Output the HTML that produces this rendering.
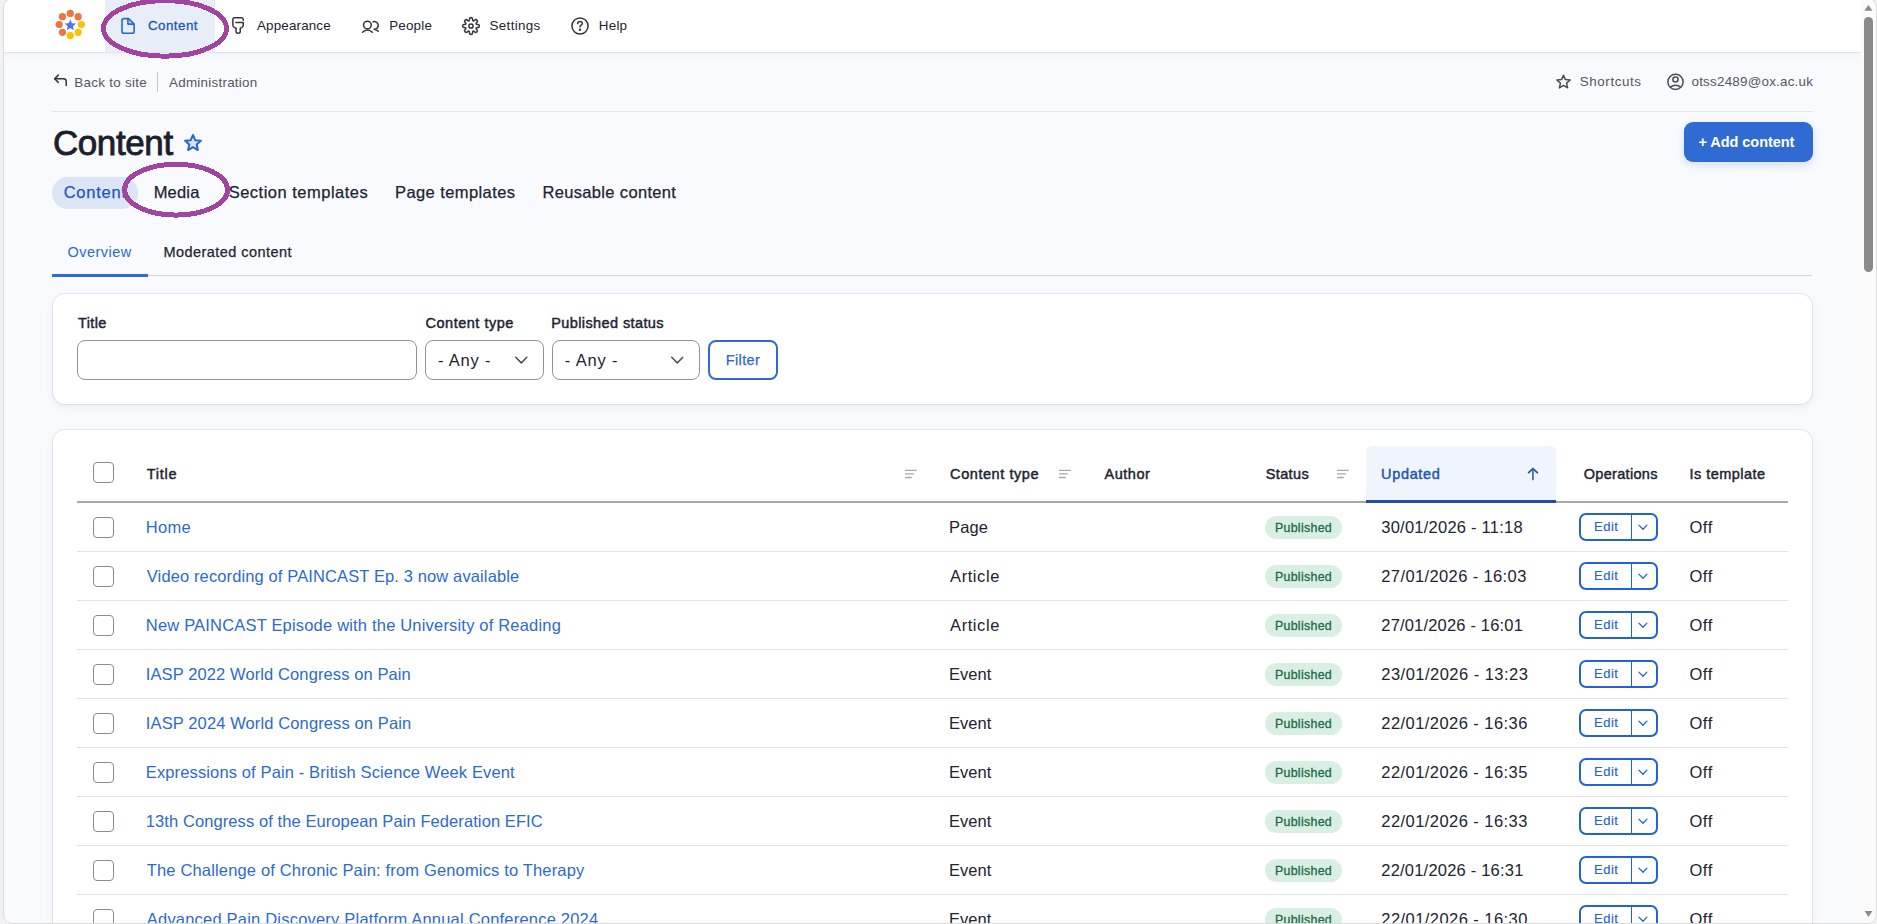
<!DOCTYPE html>
<html><head><meta charset="utf-8"><title>Content</title>
<style>
*{box-sizing:border-box;margin:0;padding:0}
html,body{width:1877px;height:924px;overflow:hidden;background:#f8fafe;font-family:"Liberation Sans",sans-serif;position:relative}
.ab{position:absolute}
.t{position:absolute;white-space:nowrap}
.topbar{position:absolute;left:0;top:0;width:1861px;height:52px;background:#fff;box-shadow:0 1px 0 rgba(40,50,90,.07),0 2px 6px rgba(40,50,90,.06)}
.card{position:absolute;background:#fff;border-radius:12px;box-shadow:0 0 0 1px rgba(0,0,0,.065),0 3px 8px rgba(40,55,90,.07)}
.inp{position:absolute;border:1px solid #8e929c;border-radius:8px;background:#fff}
.cb{position:absolute;width:21px;height:21px;border:1.1px solid #878b98;border-radius:4px;background:#fff}
.badge{position:absolute;width:77px;height:23px;border-radius:12px;background:#d9efe4;color:#1e6a48;font-size:12px;font-weight:700;line-height:23px;text-align:center;letter-spacing:-0.1px}
.eb{position:absolute;width:79px;height:28px;border:2px solid #2463cf;border-radius:7px;background:#fff}
.ebt{position:absolute;left:14.5px;top:7px;font-size:12.5px;line-height:14px;color:#2463cf}
.ebd{position:absolute;left:49.9px;top:0;width:1.2px;height:24px;background:#2463cf}
.frame{position:absolute;left:4px;top:-1px;width:1872px;height:924px;border-radius:8px;box-shadow:0 0 0 1px #dcdcdc,0 0 0 30px #f2f2f2;pointer-events:none}
</style></head><body>
<div class="topbar"></div>
<div style="position:absolute;left:105px;top:0;width:110px;height:52px;background:#e8eef8"></div>
<svg class="ab" style="left:50px;top:5px" width="40" height="40" viewBox="50 5 40 40"><circle cx="70.30" cy="13.40" r="3.6" fill="#ee7440"/><circle cx="78.15" cy="16.65" r="3.6" fill="#ee7440"/><circle cx="81.40" cy="24.50" r="3.6" fill="#fcc200"/><circle cx="78.15" cy="32.35" r="3.6" fill="#fcc200"/><circle cx="70.30" cy="35.60" r="3.6" fill="#fcc200"/><circle cx="62.45" cy="32.35" r="3.6" fill="#ee7440"/><circle cx="59.20" cy="24.50" r="3.6" fill="#ee7440"/><circle cx="62.45" cy="16.65" r="3.6" fill="#ee7440"/><polygon points="70.30,19.40 71.89,23.22 76.01,23.55 72.87,26.23 73.83,30.25 70.30,28.10 66.77,30.25 67.73,26.23 64.59,23.55 68.71,23.22" fill="#4f6ff5"/></svg>
<svg class="ab" style="left:115px;top:12px" width="26" height="28" viewBox="115 12 26 28" fill="none" stroke="#2a66d0" stroke-width="1.6" stroke-linejoin="round"><path d="M128.3 18.8 V24.1 H134.1 Z" fill="#c9d8f2" stroke="none"/><path d="M128.6 18.6 H123.8 Q122 18.6 122 20.4 V31.4 Q122 33.2 123.8 33.2 H132.3 Q134.1 33.2 134.1 31.4 V24.1 Z"/><path d="M127.9 18.6 V24.1 H134.1"/></svg>
<svg class="ab" style="left:228px;top:13px" width="20" height="25" viewBox="228 13 20 25" fill="none" stroke="#34353f" stroke-width="1.5" stroke-linecap="round" stroke-linejoin="round"><path d="M243.25 20.3 V19.5 Q243.25 17.85 241.6 17.85 H234.5 Q232.85 17.85 232.85 19.5 V25.3 Q232.85 27 234.6 27.6 L236.05 28.2 V31.6 Q236.05 33.35 238.15 33.35 Q240.25 33.35 240.25 31.6 V28.2 L241.6 27.6 Q243.25 27 243.25 25.3 V22.6 H235.9"/></svg>
<svg class="ab" style="left:357px;top:15px" width="26" height="22" viewBox="357 15 26 22" fill="none" stroke="#34353f" stroke-width="1.5" stroke-linecap="round"><circle cx="367.4" cy="25" r="3.85"/><path d="M362.5 32.3 Q367.4 27.6 372.4 32.3"/><path d="M373 21.9 A3.8 3.8 0 1 1 374.2 29.2"/><path d="M374.6 29.6 Q377 29.9 378.2 31.3"/></svg>
<svg class="ab" style="left:459px;top:14px" width="24" height="24" viewBox="459 14 24 24" fill="none" stroke="#34353f" stroke-width="1.5" stroke-linejoin="round"><path d="M469.26 20.36 L469.65 18.12 Q471.00 17.10 472.35 18.12 L472.74 20.36 Q473.03 21.10 473.75 20.78 L473.75 20.78 L475.62 19.47 Q477.29 19.71 477.53 21.38 L476.22 23.25 Q475.90 23.97 476.64 24.26 L476.64 24.26 L478.88 24.65 Q479.90 26.00 478.88 27.35 L476.64 27.74 Q475.90 28.03 476.22 28.75 L476.22 28.75 L477.53 30.62 Q477.29 32.29 475.62 32.53 L473.75 31.22 Q473.03 30.90 472.74 31.64 L472.74 31.64 L472.35 33.88 Q471.00 34.90 469.65 33.88 L469.26 31.64 Q468.97 30.90 468.25 31.22 L468.25 31.22 L466.38 32.53 Q464.71 32.29 464.47 30.62 L465.78 28.75 Q466.10 28.03 465.36 27.74 L465.36 27.74 L463.12 27.35 Q462.10 26.00 463.12 24.65 L465.36 24.26 Q466.10 23.97 465.78 23.25 L465.78 23.25 L464.47 21.38 Q464.71 19.71 466.38 19.47 L468.25 20.78 Q468.97 21.10 469.26 20.36 Z"/><circle cx="471" cy="26" r="2.1"/></svg>
<svg class="ab" style="left:567px;top:14px" width="24" height="24" viewBox="567 14 24 24" fill="none" stroke="#34353f" stroke-width="1.5" stroke-linecap="round"><circle cx="580" cy="26" r="8.05"/><path d="M577.6 23.6 Q577.8 21.4 580 21.4 Q582.3 21.4 582.3 23.4 Q582.3 24.6 580.9 25.3 Q580 25.8 580 27"/><circle cx="580" cy="29.8" r="0.5" fill="#34353f"/></svg>
<svg class="ab" style="left:50px;top:70px" width="22" height="22" viewBox="50 70 22 22" fill="none" stroke="#34353f" stroke-width="1.5" stroke-linecap="round" stroke-linejoin="round"><path d="M58.3 75.1 L54.6 78.8 L58.3 82.4"/><path d="M54.8 78.8 H63.6 Q66.2 78.8 66.2 81.4 V85.4"/></svg>
<div class="ab" style="left:157px;top:72px;width:1px;height:20px;background:#c9cad0"></div>
<svg class="ab" style="left:1552px;top:70px" width="22" height="22" viewBox="1552 70 22 22" fill="none" stroke="#4b4c57" stroke-width="1.5" stroke-linejoin="round"><polygon points="1563.50,75.20 1565.38,79.61 1570.16,80.04 1566.54,83.19 1567.61,87.86 1563.50,85.40 1559.39,87.86 1560.46,83.19 1556.84,80.04 1561.62,79.61"/></svg>
<svg class="ab" style="left:1664px;top:71px" width="24" height="22" viewBox="1664 71 24 22" fill="none" stroke="#4b4c57" stroke-width="1.5"><circle cx="1675.5" cy="81.9" r="7.6"/><ellipse cx="1675.5" cy="79.6" rx="2.6" ry="2.5"/><path d="M1670 87.3 Q1675.5 83.2 1681 87.3"/></svg>
<div class="ab" style="left:52px;top:111px;width:1761px;height:1px;background:#e3e4e8"></div>
<svg class="ab" style="left:180px;top:130px" width="26" height="26" viewBox="180 130 26 26" fill="#d6e2f5" stroke="#2a66d0" stroke-width="2" stroke-linejoin="round"><polygon points="193.00,135.00 195.29,140.14 200.89,140.74 196.71,144.51 197.88,150.01 193.00,147.20 188.12,150.01 189.29,144.51 185.11,140.74 190.71,140.14"/></svg>
<div class="ab" style="left:1684px;top:122px;width:129px;height:40px;background:#2f6bd2;border-radius:9px;box-shadow:0 3px 8px rgba(47,107,210,.18)"></div>
<div class="ab" style="left:52px;top:177px;width:86px;height:32px;background:#dbe5f5;border-radius:16px"></div>
<div class="ab" style="left:52px;top:275px;width:1760px;height:1px;background:#d3d4da"></div>
<div class="ab" style="left:52px;top:274px;width:96px;height:3px;background:#2f6bd2"></div>
<div class="card" style="left:53px;top:294px;width:1759px;height:110px"></div>
<div class="inp" style="left:77px;top:340px;width:340px;height:40px"></div>
<div class="inp" style="left:425px;top:340px;width:119px;height:40px"></div>
<div class="inp" style="left:552px;top:340px;width:148px;height:40px"></div>
<svg class="ab" style="left:512.7px;top:353px" width="18" height="14" viewBox="512.7 353 18 14" fill="none" stroke="#4b4c57" stroke-width="1.5" stroke-linecap="round" stroke-linejoin="round"><path d="M515.4 357.3 L521.0 362.9 L526.5 357.3"/></svg>
<svg class="ab" style="left:668.8px;top:353px" width="18" height="14" viewBox="668.8 353 18 14" fill="none" stroke="#4b4c57" stroke-width="1.5" stroke-linecap="round" stroke-linejoin="round"><path d="M671.5 357.3 L677.1 362.9 L682.6 357.3"/></svg>
<div class="ab" style="left:708px;top:340px;width:70px;height:40px;border:2px solid #2f6bd2;border-radius:8px;background:#fff"></div>
<div class="card" style="left:53px;top:430px;width:1759px;height:600px"></div>
<div class="ab" style="left:1366px;top:446px;width:190px;height:57px;background:#f0f4fb;border-radius:6px 6px 0 0"></div>
<div class="ab" style="left:77px;top:501px;width:1711px;height:2px;background:#a9a9ad"></div>
<div class="ab" style="left:1366px;top:500px;width:190px;height:3px;background:#1f4fa0"></div>
<div class="cb" style="left:93px;top:462px"></div>
<svg class="ab" style="left:904.1px;top:466px" width="15" height="16" viewBox="904.1 466 15 16" stroke="#a4a6ae" stroke-width="1.3" stroke-linecap="round"><path d="M905.7 470.4 H916.3 M905.7 473.9 H913.6 M905.7 477.5 H911.4"/></svg>
<svg class="ab" style="left:1058.1px;top:466px" width="15" height="16" viewBox="1058.1 466 15 16" stroke="#a4a6ae" stroke-width="1.3" stroke-linecap="round"><path d="M1059.7 470.4 H1070.3 M1059.7 473.9 H1067.6 M1059.7 477.5 H1065.4"/></svg>
<svg class="ab" style="left:1336.0px;top:466px" width="15" height="16" viewBox="1336.0 466 15 16" stroke="#a4a6ae" stroke-width="1.3" stroke-linecap="round"><path d="M1337.6 470.4 H1348.2 M1337.6 473.9 H1345.5 M1337.6 477.5 H1343.3"/></svg>
<svg class="ab" style="left:1522px;top:462px" width="22" height="24" viewBox="1522 462 22 24" fill="none" stroke="#1f4fa0" stroke-width="1.7" stroke-linecap="round" stroke-linejoin="round"><path d="M1528.6 472.6 L1532.9 468.5 L1537.3 472.6"/><path d="M1532.9 469 V479.5" stroke="#3b68b5"/></svg>
<div class="cb" style="left:93px;top:517px"></div>
<div class="badge" style="left:1265px;top:516px"></div>
<div class="eb" style="left:1579px;top:513px"><span class="ebd"></span><svg class="ab" style="left:55px;top:9px" width="14" height="8" viewBox="0 0 14 8" fill="none" stroke="#2463cf" stroke-width="1.3" stroke-linecap="round" stroke-linejoin="round"><path d="M2.9 1.1 L7 5.2 L10.9 1.1"/></svg></div>
<div class="ab" style="left:77px;top:551px;width:1711px;height:1px;background:#e1e2e6"></div>
<div class="cb" style="left:93px;top:566px"></div>
<div class="badge" style="left:1265px;top:565px"></div>
<div class="eb" style="left:1579px;top:562px"><span class="ebd"></span><svg class="ab" style="left:55px;top:9px" width="14" height="8" viewBox="0 0 14 8" fill="none" stroke="#2463cf" stroke-width="1.3" stroke-linecap="round" stroke-linejoin="round"><path d="M2.9 1.1 L7 5.2 L10.9 1.1"/></svg></div>
<div class="ab" style="left:77px;top:600px;width:1711px;height:1px;background:#e1e2e6"></div>
<div class="cb" style="left:93px;top:615px"></div>
<div class="badge" style="left:1265px;top:614px"></div>
<div class="eb" style="left:1579px;top:611px"><span class="ebd"></span><svg class="ab" style="left:55px;top:9px" width="14" height="8" viewBox="0 0 14 8" fill="none" stroke="#2463cf" stroke-width="1.3" stroke-linecap="round" stroke-linejoin="round"><path d="M2.9 1.1 L7 5.2 L10.9 1.1"/></svg></div>
<div class="ab" style="left:77px;top:649px;width:1711px;height:1px;background:#e1e2e6"></div>
<div class="cb" style="left:93px;top:664px"></div>
<div class="badge" style="left:1265px;top:663px"></div>
<div class="eb" style="left:1579px;top:660px"><span class="ebd"></span><svg class="ab" style="left:55px;top:9px" width="14" height="8" viewBox="0 0 14 8" fill="none" stroke="#2463cf" stroke-width="1.3" stroke-linecap="round" stroke-linejoin="round"><path d="M2.9 1.1 L7 5.2 L10.9 1.1"/></svg></div>
<div class="ab" style="left:77px;top:698px;width:1711px;height:1px;background:#e1e2e6"></div>
<div class="cb" style="left:93px;top:713px"></div>
<div class="badge" style="left:1265px;top:712px"></div>
<div class="eb" style="left:1579px;top:709px"><span class="ebd"></span><svg class="ab" style="left:55px;top:9px" width="14" height="8" viewBox="0 0 14 8" fill="none" stroke="#2463cf" stroke-width="1.3" stroke-linecap="round" stroke-linejoin="round"><path d="M2.9 1.1 L7 5.2 L10.9 1.1"/></svg></div>
<div class="ab" style="left:77px;top:747px;width:1711px;height:1px;background:#e1e2e6"></div>
<div class="cb" style="left:93px;top:762px"></div>
<div class="badge" style="left:1265px;top:761px"></div>
<div class="eb" style="left:1579px;top:758px"><span class="ebd"></span><svg class="ab" style="left:55px;top:9px" width="14" height="8" viewBox="0 0 14 8" fill="none" stroke="#2463cf" stroke-width="1.3" stroke-linecap="round" stroke-linejoin="round"><path d="M2.9 1.1 L7 5.2 L10.9 1.1"/></svg></div>
<div class="ab" style="left:77px;top:796px;width:1711px;height:1px;background:#e1e2e6"></div>
<div class="cb" style="left:93px;top:811px"></div>
<div class="badge" style="left:1265px;top:810px"></div>
<div class="eb" style="left:1579px;top:807px"><span class="ebd"></span><svg class="ab" style="left:55px;top:9px" width="14" height="8" viewBox="0 0 14 8" fill="none" stroke="#2463cf" stroke-width="1.3" stroke-linecap="round" stroke-linejoin="round"><path d="M2.9 1.1 L7 5.2 L10.9 1.1"/></svg></div>
<div class="ab" style="left:77px;top:845px;width:1711px;height:1px;background:#e1e2e6"></div>
<div class="cb" style="left:93px;top:860px"></div>
<div class="badge" style="left:1265px;top:859px"></div>
<div class="eb" style="left:1579px;top:856px"><span class="ebd"></span><svg class="ab" style="left:55px;top:9px" width="14" height="8" viewBox="0 0 14 8" fill="none" stroke="#2463cf" stroke-width="1.3" stroke-linecap="round" stroke-linejoin="round"><path d="M2.9 1.1 L7 5.2 L10.9 1.1"/></svg></div>
<div class="ab" style="left:77px;top:894px;width:1711px;height:1px;background:#e1e2e6"></div>
<div class="cb" style="left:93px;top:909px"></div>
<div class="badge" style="left:1265px;top:908px"></div>
<div class="eb" style="left:1579px;top:905px"><span class="ebd"></span><svg class="ab" style="left:55px;top:9px" width="14" height="8" viewBox="0 0 14 8" fill="none" stroke="#2463cf" stroke-width="1.3" stroke-linecap="round" stroke-linejoin="round"><path d="M2.9 1.1 L7 5.2 L10.9 1.1"/></svg></div>
<div class="t" id="nav_content" style="left:148.00px;top:19px;font-size:13.4px;line-height:13.4px;color:#1f57b5;-webkit-text-stroke:0.3px #1f57b5;letter-spacing:0.435px;">Content</div>
<div class="t" id="nav_app" style="left:257.00px;top:19px;font-size:13.4px;line-height:13.4px;color:#222330;letter-spacing:0.159px;">Appearance</div>
<div class="t" id="nav_people" style="left:389.20px;top:19px;font-size:13.4px;line-height:13.4px;color:#222330;letter-spacing:0.200px;">People</div>
<div class="t" id="nav_settings" style="left:489.50px;top:19px;font-size:13.4px;line-height:13.4px;color:#222330;letter-spacing:0.344px;">Settings</div>
<div class="t" id="nav_help" style="left:598.80px;top:19px;font-size:13.4px;line-height:13.4px;color:#222330;letter-spacing:0.234px;">Help</div>
<div class="t" id="bc_back" style="left:74.20px;top:76px;font-size:13.4px;line-height:13.4px;color:#545560;letter-spacing:0.293px;">Back to site</div>
<div class="t" id="bc_admin" style="left:169.00px;top:76px;font-size:13.4px;line-height:13.4px;color:#545560;letter-spacing:0.260px;">Administration</div>
<div class="t" id="sc" style="left:1579.80px;top:75px;font-size:13.4px;line-height:13.4px;color:#545560;letter-spacing:0.575px;">Shortcuts</div>
<div class="t" id="email" style="left:1691.50px;top:75px;font-size:13.4px;line-height:13.4px;color:#545560;letter-spacing:0.227px;">otss2489@ox.ac.uk</div>
<div class="t" id="title" style="left:52.90px;top:125px;font-size:35px;line-height:35px;color:#1d1e2a;-webkit-text-stroke:0.85px #1d1e2a;letter-spacing:-0.384px;">Content</div>
<div class="t" id="addbtn" style="left:1698.40px;top:135px;font-size:14.5px;line-height:14.5px;color:#ffffff;font-weight:700;letter-spacing:-0.042px;">+ Add content</div>
<div class="t" id="tab_content" style="left:63.70px;top:184px;font-size:16.5px;line-height:16.5px;color:#1f57b5;-webkit-text-stroke:0.25px #1f57b5;letter-spacing:0.750px;">Content</div>
<div class="t" id="tab_media" style="left:153.70px;top:184px;font-size:16.5px;line-height:16.5px;color:#222330;-webkit-text-stroke:0.25px #222330;letter-spacing:0.175px;">Media</div>
<div class="t" id="tab_section" style="left:228.70px;top:184px;font-size:16.5px;line-height:16.5px;color:#222330;-webkit-text-stroke:0.25px #222330;letter-spacing:0.492px;">Section templates</div>
<div class="t" id="tab_page" style="left:395.00px;top:184px;font-size:16.5px;line-height:16.5px;color:#222330;-webkit-text-stroke:0.25px #222330;letter-spacing:0.414px;">Page templates</div>
<div class="t" id="tab_reuse" style="left:542.50px;top:184px;font-size:16.5px;line-height:16.5px;color:#222330;-webkit-text-stroke:0.25px #222330;letter-spacing:0.333px;">Reusable content</div>
<div class="t" id="st_over" style="left:67.50px;top:245px;font-size:14.5px;line-height:14.5px;color:#2d69d2;letter-spacing:0.487px;">Overview</div>
<div class="t" id="st_mod" style="left:163.40px;top:245px;font-size:14.5px;line-height:14.5px;color:#222330;-webkit-text-stroke:0.25px #222330;letter-spacing:0.446px;">Moderated content</div>
<div class="t" id="lbl_title" style="left:78.00px;top:316px;font-size:14.5px;line-height:14.5px;color:#222330;-webkit-text-stroke:0.45px #222330;letter-spacing:0.375px;">Title</div>
<div class="t" id="lbl_ct" style="left:425.50px;top:316px;font-size:14.5px;line-height:14.5px;color:#222330;-webkit-text-stroke:0.45px #222330;letter-spacing:0.516px;">Content type</div>
<div class="t" id="lbl_ps" style="left:551.20px;top:316px;font-size:14.5px;line-height:14.5px;color:#222330;-webkit-text-stroke:0.45px #222330;letter-spacing:0.400px;">Published status</div>
<div class="t" id="any1" style="left:437.90px;top:352px;font-size:16.5px;line-height:16.5px;color:#222330;letter-spacing:0.833px;">- Any -</div>
<div class="t" id="any2" style="left:564.80px;top:352px;font-size:16.5px;line-height:16.5px;color:#222330;letter-spacing:0.833px;">- Any -</div>
<div class="t" id="filter" style="left:725.70px;top:353px;font-size:14.5px;line-height:14.5px;color:#2d69d2;-webkit-text-stroke:0.25px #2d69d2;letter-spacing:0.400px;">Filter</div>
<div class="t" id="h_title" style="left:146.80px;top:467px;font-size:14.5px;line-height:14.5px;color:#222330;-webkit-text-stroke:0.45px #222330;letter-spacing:0.725px;">Title</div>
<div class="t" id="h_ct" style="left:950.10px;top:467px;font-size:14.5px;line-height:14.5px;color:#222330;-webkit-text-stroke:0.45px #222330;letter-spacing:0.565px;">Content type</div>
<div class="t" id="h_author" style="left:1104.60px;top:467px;font-size:14.5px;line-height:14.5px;color:#222330;-webkit-text-stroke:0.45px #222330;letter-spacing:0.500px;">Author</div>
<div class="t" id="h_status" style="left:1265.70px;top:467px;font-size:14.5px;line-height:14.5px;color:#222330;-webkit-text-stroke:0.45px #222330;letter-spacing:0.380px;">Status</div>
<div class="t" id="h_updated" style="left:1381.10px;top:467px;font-size:14.5px;line-height:14.5px;color:#1f55b0;-webkit-text-stroke:0.45px #1f55b0;letter-spacing:0.652px;">Updated</div>
<div class="t" id="h_ops" style="left:1583.70px;top:467px;font-size:14.5px;line-height:14.5px;color:#222330;-webkit-text-stroke:0.45px #222330;letter-spacing:0.321px;">Operations</div>
<div class="t" id="h_tpl" style="left:1689.40px;top:467px;font-size:14.5px;line-height:14.5px;color:#222330;-webkit-text-stroke:0.45px #222330;letter-spacing:0.480px;">Is template</div>
<div class="t" id="r0_title" style="left:145.80px;top:519px;font-size:16.5px;line-height:16.5px;color:#2d69d2;letter-spacing:0.268px;">Home</div>
<div class="t" id="r0_ct" style="left:949.10px;top:519px;font-size:16.5px;line-height:16.5px;color:#222330;letter-spacing:0.135px;">Page</div>
<div class="t" id="r0_date" style="left:1381.30px;top:519px;font-size:16.5px;line-height:16.5px;color:#222330;letter-spacing:0.234px;">30/01/2026 - 11:18</div>
<div class="t" id="r0_off" style="left:1689.40px;top:519px;font-size:16.5px;line-height:16.5px;color:#222330;letter-spacing:0.650px;">Off</div>
<div class="t" id="r0_pub" style="left:1274.90px;top:522px;font-size:12.4px;line-height:12.4px;color:#1e6a48;-webkit-text-stroke:0.3px #1e6a48;letter-spacing:0.300px;">Published</div>
<div class="t" id="r0_edit" style="left:1594.10px;top:520px;font-size:13px;line-height:13px;color:#2463cf;-webkit-text-stroke:0.15px #2463cf;letter-spacing:0.468px;">Edit</div>
<div class="t" id="r1_title" style="left:146.80px;top:568px;font-size:16.5px;line-height:16.5px;color:#2d69d2;letter-spacing:0.120px;">Video recording of PAINCAST Ep. 3 now available</div>
<div class="t" id="r1_ct" style="left:950.10px;top:568px;font-size:16.5px;line-height:16.5px;color:#222330;letter-spacing:0.565px;">Article</div>
<div class="t" id="r1_date" style="left:1381.30px;top:568px;font-size:16.5px;line-height:16.5px;color:#222330;letter-spacing:0.381px;">27/01/2026 - 16:03</div>
<div class="t" id="r1_off" style="left:1689.40px;top:568px;font-size:16.5px;line-height:16.5px;color:#222330;letter-spacing:0.650px;">Off</div>
<div class="t" id="r1_pub" style="left:1274.90px;top:571px;font-size:12.4px;line-height:12.4px;color:#1e6a48;-webkit-text-stroke:0.3px #1e6a48;letter-spacing:0.300px;">Published</div>
<div class="t" id="r1_edit" style="left:1594.10px;top:569px;font-size:13px;line-height:13px;color:#2463cf;-webkit-text-stroke:0.15px #2463cf;letter-spacing:0.468px;">Edit</div>
<div class="t" id="r2_title" style="left:145.80px;top:617px;font-size:16.5px;line-height:16.5px;color:#2d69d2;letter-spacing:0.188px;">New PAINCAST Episode with the University of Reading</div>
<div class="t" id="r2_ct" style="left:950.10px;top:617px;font-size:16.5px;line-height:16.5px;color:#222330;letter-spacing:0.565px;">Article</div>
<div class="t" id="r2_date" style="left:1381.30px;top:617px;font-size:16.5px;line-height:16.5px;color:#222330;letter-spacing:0.176px;">27/01/2026 - 16:01</div>
<div class="t" id="r2_off" style="left:1689.40px;top:617px;font-size:16.5px;line-height:16.5px;color:#222330;letter-spacing:0.650px;">Off</div>
<div class="t" id="r2_pub" style="left:1274.90px;top:620px;font-size:12.4px;line-height:12.4px;color:#1e6a48;-webkit-text-stroke:0.3px #1e6a48;letter-spacing:0.300px;">Published</div>
<div class="t" id="r2_edit" style="left:1594.10px;top:618px;font-size:13px;line-height:13px;color:#2463cf;-webkit-text-stroke:0.15px #2463cf;letter-spacing:0.468px;">Edit</div>
<div class="t" id="r3_title" style="left:145.80px;top:666px;font-size:16.5px;line-height:16.5px;color:#2d69d2;letter-spacing:0.106px;">IASP 2022 World Congress on Pain</div>
<div class="t" id="r3_ct" style="left:949.10px;top:666px;font-size:16.5px;line-height:16.5px;color:#222330;">Event</div>
<div class="t" id="r3_date" style="left:1381.30px;top:666px;font-size:16.5px;line-height:16.5px;color:#222330;letter-spacing:0.472px;">23/01/2026 - 13:23</div>
<div class="t" id="r3_off" style="left:1689.40px;top:666px;font-size:16.5px;line-height:16.5px;color:#222330;letter-spacing:0.650px;">Off</div>
<div class="t" id="r3_pub" style="left:1274.90px;top:669px;font-size:12.4px;line-height:12.4px;color:#1e6a48;-webkit-text-stroke:0.3px #1e6a48;letter-spacing:0.300px;">Published</div>
<div class="t" id="r3_edit" style="left:1594.10px;top:667px;font-size:13px;line-height:13px;color:#2463cf;-webkit-text-stroke:0.15px #2463cf;letter-spacing:0.468px;">Edit</div>
<div class="t" id="r4_title" style="left:145.80px;top:715px;font-size:16.5px;line-height:16.5px;color:#2d69d2;letter-spacing:0.120px;">IASP 2024 World Congress on Pain</div>
<div class="t" id="r4_ct" style="left:949.10px;top:715px;font-size:16.5px;line-height:16.5px;color:#222330;">Event</div>
<div class="t" id="r4_date" style="left:1381.30px;top:715px;font-size:16.5px;line-height:16.5px;color:#222330;letter-spacing:0.441px;">22/01/2026 - 16:36</div>
<div class="t" id="r4_off" style="left:1689.40px;top:715px;font-size:16.5px;line-height:16.5px;color:#222330;letter-spacing:0.650px;">Off</div>
<div class="t" id="r4_pub" style="left:1274.90px;top:718px;font-size:12.4px;line-height:12.4px;color:#1e6a48;-webkit-text-stroke:0.3px #1e6a48;letter-spacing:0.300px;">Published</div>
<div class="t" id="r4_edit" style="left:1594.10px;top:716px;font-size:13px;line-height:13px;color:#2463cf;-webkit-text-stroke:0.15px #2463cf;letter-spacing:0.468px;">Edit</div>
<div class="t" id="r5_title" style="left:145.80px;top:764px;font-size:16.5px;line-height:16.5px;color:#2d69d2;letter-spacing:0.128px;">Expressions of Pain - British Science Week Event</div>
<div class="t" id="r5_ct" style="left:949.10px;top:764px;font-size:16.5px;line-height:16.5px;color:#222330;">Event</div>
<div class="t" id="r5_date" style="left:1381.30px;top:764px;font-size:16.5px;line-height:16.5px;color:#222330;letter-spacing:0.441px;">22/01/2026 - 16:35</div>
<div class="t" id="r5_off" style="left:1689.40px;top:764px;font-size:16.5px;line-height:16.5px;color:#222330;letter-spacing:0.650px;">Off</div>
<div class="t" id="r5_pub" style="left:1274.90px;top:767px;font-size:12.4px;line-height:12.4px;color:#1e6a48;-webkit-text-stroke:0.3px #1e6a48;letter-spacing:0.300px;">Published</div>
<div class="t" id="r5_edit" style="left:1594.10px;top:765px;font-size:13px;line-height:13px;color:#2463cf;-webkit-text-stroke:0.15px #2463cf;letter-spacing:0.468px;">Edit</div>
<div class="t" id="r6_title" style="left:145.80px;top:813px;font-size:16.5px;line-height:16.5px;color:#2d69d2;letter-spacing:0.088px;">13th Congress of the European Pain Federation EFIC</div>
<div class="t" id="r6_ct" style="left:949.10px;top:813px;font-size:16.5px;line-height:16.5px;color:#222330;">Event</div>
<div class="t" id="r6_date" style="left:1381.30px;top:813px;font-size:16.5px;line-height:16.5px;color:#222330;letter-spacing:0.441px;">22/01/2026 - 16:33</div>
<div class="t" id="r6_off" style="left:1689.40px;top:813px;font-size:16.5px;line-height:16.5px;color:#222330;letter-spacing:0.650px;">Off</div>
<div class="t" id="r6_pub" style="left:1274.90px;top:816px;font-size:12.4px;line-height:12.4px;color:#1e6a48;-webkit-text-stroke:0.3px #1e6a48;letter-spacing:0.300px;">Published</div>
<div class="t" id="r6_edit" style="left:1594.10px;top:814px;font-size:13px;line-height:13px;color:#2463cf;-webkit-text-stroke:0.15px #2463cf;letter-spacing:0.468px;">Edit</div>
<div class="t" id="r7_title" style="left:146.80px;top:862px;font-size:16.5px;line-height:16.5px;color:#2d69d2;letter-spacing:0.158px;">The Challenge of Chronic Pain: from Genomics to Therapy</div>
<div class="t" id="r7_ct" style="left:949.10px;top:862px;font-size:16.5px;line-height:16.5px;color:#222330;">Event</div>
<div class="t" id="r7_date" style="left:1381.30px;top:862px;font-size:16.5px;line-height:16.5px;color:#222330;letter-spacing:0.205px;">22/01/2026 - 16:31</div>
<div class="t" id="r7_off" style="left:1689.40px;top:862px;font-size:16.5px;line-height:16.5px;color:#222330;letter-spacing:0.650px;">Off</div>
<div class="t" id="r7_pub" style="left:1274.90px;top:865px;font-size:12.4px;line-height:12.4px;color:#1e6a48;-webkit-text-stroke:0.3px #1e6a48;letter-spacing:0.300px;">Published</div>
<div class="t" id="r7_edit" style="left:1594.10px;top:863px;font-size:13px;line-height:13px;color:#2463cf;-webkit-text-stroke:0.15px #2463cf;letter-spacing:0.468px;">Edit</div>
<div class="t" id="r8_title" style="left:146.80px;top:911px;font-size:16.5px;line-height:16.5px;color:#2d69d2;letter-spacing:0.205px;">Advanced Pain Discovery Platform Annual Conference 2024</div>
<div class="t" id="r8_ct" style="left:949.10px;top:911px;font-size:16.5px;line-height:16.5px;color:#222330;">Event</div>
<div class="t" id="r8_date" style="left:1381.30px;top:911px;font-size:16.5px;line-height:16.5px;color:#222330;letter-spacing:0.441px;">22/01/2026 - 16:30</div>
<div class="t" id="r8_off" style="left:1689.40px;top:911px;font-size:16.5px;line-height:16.5px;color:#222330;letter-spacing:0.650px;">Off</div>
<div class="t" id="r8_pub" style="left:1274.90px;top:914px;font-size:12.4px;line-height:12.4px;color:#1e6a48;-webkit-text-stroke:0.3px #1e6a48;letter-spacing:0.300px;">Published</div>
<div class="t" id="r8_edit" style="left:1594.10px;top:912px;font-size:13px;line-height:13px;color:#2463cf;-webkit-text-stroke:0.15px #2463cf;letter-spacing:0.468px;">Edit</div>
<svg class="ab" style="left:0;top:0" width="1877" height="924" viewBox="0 0 1877 924" fill="none" stroke="#a044a0" stroke-width="5" shape-rendering="crispEdges"><ellipse cx="165" cy="28.4" rx="61.5" ry="27.8"/><ellipse cx="176.1" cy="189.7" rx="51.5" ry="25.4"/></svg>
<div class="ab" style="left:1861px;top:0;width:16px;height:924px;background:#fbfbfb"></div>
<div class="ab" style="left:1864px;top:17px;width:9px;height:255px;background:#8b8b8b;border-radius:5px"></div>
<svg class="ab" style="left:1861px;top:0" width="16" height="924" viewBox="1861 0 16 924" fill="#8b8b8b"><polygon points="1864.3,10.8 1868.4,5 1872.5,10.8"/><polygon points="1864.6,911.1 1872.4,911.1 1868.5,916.9"/></svg>
<div class="frame"></div>
</body></html>
